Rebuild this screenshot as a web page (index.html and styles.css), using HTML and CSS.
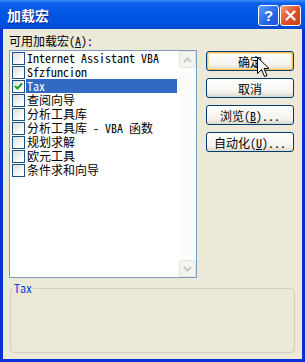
FILE: index.html
```html
<!DOCTYPE html>
<html lang="zh-CN">
<head>
  <meta charset="UTF-8">
  <title>加载宏</title>
  <link rel="stylesheet" href="styles.css">
</head>
<body>
  <div class="window">
    <div class="titlebar">
      <span class="title">加载宏</span>
      <div class="caption-btns">
        <span class="cap help">?</span>
        <span class="cap close">
          <svg width="11" height="11" viewBox="0 0 11 11"><path d="M1.5 1.5 L9.5 9.5 M9.5 1.5 L1.5 9.5" stroke="#fff" stroke-width="2.2" stroke-linecap="round"/></svg>
        </span>
      </div>
    </div>

    <div class="body">
      <div class="top">
        <div class="left">
          <div class="label">可用加载宏(<u>A</u>):</div>
          <div class="listbox">
            <ul class="items">
              <li><span class="cb"></span><span class="name">Internet Assistant VBA</span></li>
              <li><span class="cb"></span><span class="name">Sfzfuncion</span></li>
              <li class="selected"><span class="cb checked">
                <svg width="11" height="11" viewBox="0 0 11 11"><path d="M2 5 L4.5 7.5 L9 2.5" fill="none" stroke="#21a121" stroke-width="2"/></svg>
              </span><span class="name">Tax</span></li>
              <li><span class="cb"></span><span class="name">查阅向导</span></li>
              <li><span class="cb"></span><span class="name">分析工具库</span></li>
              <li><span class="cb"></span><span class="name">分析工具库 - VBA 函数</span></li>
              <li><span class="cb"></span><span class="name">规划求解</span></li>
              <li><span class="cb"></span><span class="name">欧元工具</span></li>
              <li><span class="cb"></span><span class="name">条件求和向导</span></li>
            </ul>
            <div class="scrollbar">
              <div class="sb-btn">
                <svg width="9" height="6" viewBox="0 0 9 6"><path d="M1 5 L4.5 1.5 L8 5" fill="none" stroke="#c9c7ba" stroke-width="2"/></svg>
              </div>
              <div class="sb-track"></div>
              <div class="sb-btn">
                <svg width="9" height="6" viewBox="0 0 9 6"><path d="M1 1 L4.5 4.5 L8 1" fill="none" stroke="#c9c7ba" stroke-width="2"/></svg>
              </div>
            </div>
          </div>
        </div>

        <div class="buttons">
          <button class="btn default">确定</button>
          <button class="btn">取消</button>
          <button class="btn">浏览(<u>B</u>)...</button>
          <button class="btn">自动化(<u>U</u>)...</button>
        </div>
      </div>

      <fieldset class="group">
        <legend>Tax</legend>
      </fieldset>
    </div>

    <svg class="cursor" width="13" height="21" viewBox="0 0 13 21">
      <path d="M0.5 0.5 L0.5 16.5 L4.5 12.5 L7.5 19.5 L10 18.5 L7 11.5 L12 11.5 Z" fill="#fff" stroke="#000" stroke-width="1"/>
    </svg>
  </div>
</body>
</html>
```

FILE: styles.css
```css
* {
  box-sizing: border-box;
}

body {
  margin: 0;
  font-family: "Noto Sans Mono CJK SC", "Noto Sans CJK SC", "Liberation Mono", monospace;
  font-size: 12px;
  color: #000;
}

.window {
  position: relative;
  width: 305px;
  height: 362px;
  background: #0831d9;
  display: flex;
  flex-direction: column;
}

.titlebar {
  height: 29px;
  display: flex;
  align-items: center;
  justify-content: space-between;
  padding: 0 4px 0 7px;
  background: linear-gradient(#3d8df9 0, #0f62ec 3px, #0257e8 40%, #0052e0 75%, #004ad2 100%);
}

.title {
  color: #fff;
  font-family: "Noto Sans CJK SC", sans-serif;
  font-weight: bold;
  font-size: 14px;
  text-shadow: 1px 1px 0 #0a1f8a;
}

.caption-btns {
  display: flex;
  gap: 1px;
  margin-top: 1px;
}

.cap {
  width: 21px;
  height: 21px;
  border: 1px solid #fff;
  border-radius: 3px;
  display: flex;
  align-items: center;
  justify-content: center;
  color: #fff;
}

.help {
  background: linear-gradient(135deg, #5c9bff, #2466e8 60%, #1a55d6);
  font-family: "Liberation Sans", sans-serif;
  font-weight: bold;
  font-size: 15px;
}

.close {
  background: linear-gradient(135deg, #f0a080, #e0502a 50%, #c8401e);
}

.body {
  flex: 1;
  margin: 0 3px 3px 3px;
  background: #ece9d8;
  padding: 5px 8px 0 6px;
}

.top {
  display: flex;
  justify-content: space-between;
}

.label {
  height: 14px;
  line-height: 14px;
  margin-bottom: 2px;
}

.listbox {
  width: 188px;
  height: 228px;
  border: 1px solid #7f9db9;
  background: #fff;
  display: flex;
}

.items {
  list-style: none;
  margin: 0;
  padding: 0 2px 0 2px;
  flex: 1;
}

.items li {
  height: 14px;
  display: flex;
  align-items: center;
}

.cb {
  width: 13px;
  height: 13px;
  border: 1px solid #1c5180;
  background: linear-gradient(135deg, #dcdcd7, #fff 80%);
  display: flex;
  align-items: center;
  justify-content: center;
}

.name {
  flex: 1;
  height: 14px;
  line-height: 14px;
  margin-left: 1px;
  padding-left: 1px;
  white-space: nowrap;
}

.selected .name {
  background: #316ac5;
  color: #fff;
}

.scrollbar {
  width: 17px;
  display: flex;
  flex-direction: column;
  background: #fcfcfa;
}

.sb-btn {
  height: 17px;
  border: 1px solid #e6e4da;
  border-radius: 2px;
  background: #f5f4ef;
  display: flex;
  align-items: center;
  justify-content: center;
}

.sb-track {
  flex: 1;
}

.buttons {
  display: flex;
  flex-direction: column;
  gap: 7px;
  margin-top: 17px;
}

.btn {
  width: 88px;
  height: 20px;
  padding: 0;
  font: inherit;
  border: 1px solid #003c74;
  border-radius: 3px;
  background: linear-gradient(#fff, #f4f3ee 70%, #dcd8cb);
  color: #000;
}

.btn.default {
  box-shadow: inset 0 0 0 1px #f7c35a, inset 0 0 0 2px #fde0a0;
}

.group {
  margin: 4px -1px 0 1px;
  padding: 0;
  height: 71px;
  border: 1px solid #d0d0bf;
  border-radius: 4px;
}

.group legend {
  color: #0046d5;
  padding: 0 1px;
  margin-left: 2px;
  line-height: 12px;
}

.cursor {
  position: absolute;
  left: 257px;
  top: 57px;
}
```
